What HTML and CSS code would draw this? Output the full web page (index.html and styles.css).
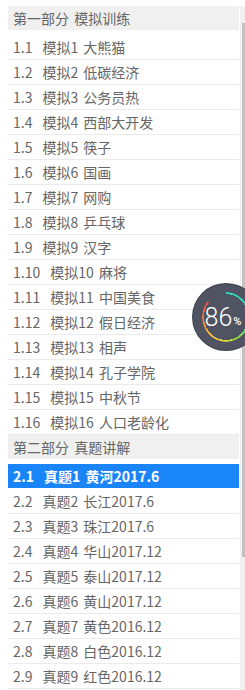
FILE: index.html
```html
<!DOCTYPE html>
<html lang="zh-CN">
<head>
    <meta charset="UTF-8">
    <meta name="viewport" content="width=device-width, initial-scale=1.0">
    <title>目录</title>
    <link rel="stylesheet" href="styles.css">
</head>
<body>
    <div class="wrap">
        <div class="menu">
            <div class="part-title">第一部分 模拟训练</div>
            <ul class="lesson-list">
                <li class="lesson"><span class="num">1.1</span>模拟1 大熊猫</li>
                <li class="lesson"><span class="num">1.2</span>模拟2 低碳经济</li>
                <li class="lesson"><span class="num">1.3</span>模拟3 公务员热</li>
                <li class="lesson"><span class="num">1.4</span>模拟4 西部大开发</li>
                <li class="lesson"><span class="num">1.5</span>模拟5 筷子</li>
                <li class="lesson"><span class="num">1.6</span>模拟6 国画</li>
                <li class="lesson"><span class="num">1.7</span>模拟7 网购</li>
                <li class="lesson"><span class="num">1.8</span>模拟8 乒乓球</li>
                <li class="lesson"><span class="num">1.9</span>模拟9 汉字</li>
                <li class="lesson"><span class="num">1.10</span>模拟10 麻将</li>
                <li class="lesson"><span class="num">1.11</span>模拟11 中国美食</li>
                <li class="lesson"><span class="num">1.12</span>模拟12 假日经济</li>
                <li class="lesson"><span class="num">1.13</span>模拟13 相声</li>
                <li class="lesson"><span class="num">1.14</span>模拟14 孔子学院</li>
                <li class="lesson"><span class="num">1.15</span>模拟15 中秋节</li>
                <li class="lesson"><span class="num">1.16</span>模拟16 人口老龄化</li>
            </ul>
            <div class="part-title">第二部分 真题讲解</div>
            <ul class="lesson-list">
                <li class="lesson active"><span class="num">2.1</span>真题1 黄河2017.6</li>
                <li class="lesson"><span class="num">2.2</span>真题2 长江2017.6</li>
                <li class="lesson"><span class="num">2.3</span>真题3 珠江2017.6</li>
                <li class="lesson"><span class="num">2.4</span>真题4 华山2017.12</li>
                <li class="lesson"><span class="num">2.5</span>真题5 泰山2017.12</li>
                <li class="lesson"><span class="num">2.6</span>真题6 黄山2017.12</li>
                <li class="lesson"><span class="num">2.7</span>真题7 黄色2016.12</li>
                <li class="lesson"><span class="num">2.8</span>真题8 白色2016.12</li>
                <li class="lesson"><span class="num">2.9</span>真题9 红色2016.12</li>
            </ul>
        </div>
        <div class="scroll-track">
            <div class="scroll-thumb"></div>
        </div>
    </div>

    <!-- floating progress ball -->
    <div class="progress-ball">
        <div class="ring"></div>
        <span class="value">86</span><span class="pct">%</span>
    </div>
</body>
</html>
```

FILE: styles.css
```css
html, body {
    margin: 0;
    padding: 0;
    height: 100%;
    overflow: hidden;
    background: #fff;
}
body {
    font-family: "Noto Sans CJK SC", "Microsoft YaHei", sans-serif;
    font-size: 14px;
    color: #666;
    position: relative;
}
.wrap {
    display: flex;
    padding: 6px 0 0 8px;
    gap: 1px;
}
.menu {
    width: 231px;
    flex: none;
}
.part-title {
    height: 24px;
    line-height: 24px;
    padding-left: 5px;
    background: #f0f0f0;
    color: #666;
    word-spacing: 2px;
}
.lesson-list {
    list-style: none;
    margin: 0;
    padding: 5px 0 0 0;
}
.lesson {
    height: 24px;
    line-height: 24px;
    padding-left: 5px;
    border-bottom: 1px solid #ebebeb;
    white-space: nowrap;
    word-spacing: 2px;
}
.lesson .num {
    margin-right: 10px;
}
.lesson.active {
    background: #1a85f8;
    color: #fff;
    font-weight: bold;
    border-bottom-color: #fff;
}
.scroll-track {
    width: 5px;
    height: 700px;
    background: #f1f1f1;
    display: flex;
    justify-content: flex-end;
}
.scroll-thumb {
    width: 3px;
    height: 534px;
    margin-top: 17px;
    background: #c1c1c1;
}
.progress-ball {
    position: absolute;
    left: 193px;
    top: 284px;
    width: 66px;
    height: 66px;
    border-radius: 50%;
    background: #4f5362;
    box-shadow: 0 0 0 1px #3d404b;
    display: flex;
    align-items: center;
    justify-content: center;
    color: #fff;
    font-family: Roboto, "Open Sans", sans-serif;
}
.progress-ball .ring {
    position: absolute;
    top: 8px;
    left: 9px;
    right: 9px;
    bottom: 8px;
    border-radius: 50%;
    background: conic-gradient(#34d9c9 0deg, #3fd59a 100deg, #8fd64c 150deg, #e4d93a 185deg, #f3b53a 225deg, #f48a38 255deg, #ef503e 300deg, #ef503e 310deg, transparent 310deg);
    -webkit-mask: radial-gradient(farthest-side, transparent calc(100% - 2px), #000 calc(100% - 2px));
    mask: radial-gradient(farthest-side, transparent calc(100% - 2px), #000 calc(100% - 2px));
}
.progress-ball .value {
    font-size: 25px;
    font-weight: 300;
    margin-left: -6px;
    line-height: 1;
}
.progress-ball .pct {
    font-size: 11px;
    font-weight: 500;
    align-self: center;
    margin-top: 8px;
    margin-left: 1px;
}
```
